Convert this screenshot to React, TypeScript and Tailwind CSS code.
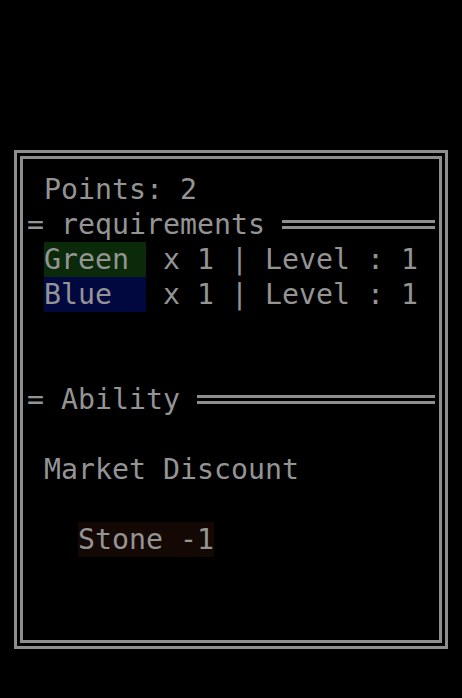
import React from 'react';

const Rule = ({ label }: { label: string }) => (
  <div className="flex h-[35px] items-center pr-[4px]">
    <span className="whitespace-pre">{`= ${label} `}</span>
    <div className="h-[9px] flex-1 border-y-[3px] border-[#8e8e8e]" />
  </div>
);

const Row = ({ indent = '', children }: { indent?: string; children?: React.ReactNode }) => (
  <div className={`flex h-[35px] items-center whitespace-pre ${indent}`}>{children}</div>
);

export default function App() {
  const reqs = [
    { name: 'Green', bg: 'bg-[#0a2a0a]' },
    { name: 'Blue', bg: 'bg-[#00083f]' },
  ];

  return (
    <div
      className="h-[698px] w-[462px] bg-black pl-[14px] pt-[150px] text-[#949494]"
      style={{ fontFamily: '"DejaVu Sans Mono", "Liberation Mono", monospace', fontSize: '28.24px', lineHeight: '35px' }}
    >
      {/* double box */}
      <div className="h-[499px] w-[434px] border-[3px] border-[#8e8e8e] p-[3px]">
        <div className="h-full border-[3px] border-[#8e8e8e] pl-[4px] pt-[13px]">
          <Row indent="pl-[17px]">Points: 2</Row>
          <Rule label="requirements" />
          {reqs.map((r) => (
            <Row key={r.name} indent="pl-[17px]">
              <span className={`w-[102px] ${r.bg}`}>{r.name}</span>
              <span>{' x 1 | Level : 1'}</span>
            </Row>
          ))}
          <Row />
          <Row />
          <Rule label="Ability" />
          <Row />
          <Row indent="pl-[17px]">Market Discount</Row>
          <Row />
          <Row indent="pl-[51px]">
            <span className="bg-[#140805]">Stone -1</span>
          </Row>
        </div>
      </div>
    </div>
  );
}
